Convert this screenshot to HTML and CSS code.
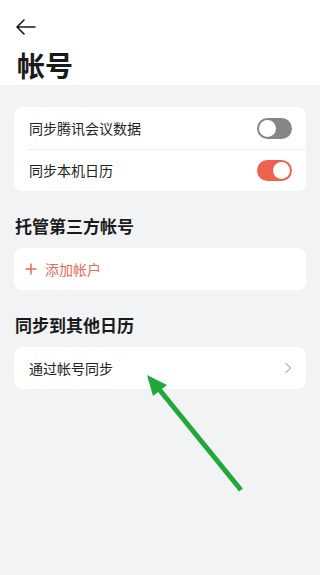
FILE: index.html
```html
<!DOCTYPE html>
<html lang="zh">
<head>
<meta charset="utf-8">
<link rel="stylesheet" href="styles.css">
</head>
<body>
<div class="page">
  <header class="header">
    <div class="back">
      <svg width="22" height="18" viewBox="0 0 22 18"><path d="M20 9H2M9 2L2 9l7 7" fill="none" stroke="#1a1a1a" stroke-width="1.6" stroke-linecap="round" stroke-linejoin="round"/></svg>
    </div>
    <h1 class="title">帐号</h1>
  </header>

  <div class="content">
    <div class="card first">
      <div class="row">
        <span class="label">同步腾讯会议数据</span>
        <span class="toggle off"><span class="knob"></span></span>
      </div>
      <div class="row divided">
        <span class="label">同步本机日历</span>
        <span class="toggle on"><span class="knob"></span></span>
      </div>
    </div>

    <div class="section-title">托管第三方帐号</div>
    <div class="card">
      <div class="row add">
        <svg class="plus" width="12" height="12" viewBox="0 0 12 12"><path d="M6 0.5v11M0.5 6h11" stroke="#e86a55" stroke-width="1.5"/></svg>
        <span class="add-label">添加帐户</span>
      </div>
    </div>

    <div class="section-title">同步到其他日历</div>
    <div class="card">
      <div class="row">
        <span class="label">通过帐号同步</span>
        <svg class="chev" width="8" height="12" viewBox="0 0 8 12"><path d="M2 1.5l4.5 4.5L2 10.5" fill="none" stroke="#b8b8bc" stroke-width="1.2" stroke-linecap="round" stroke-linejoin="round"/></svg>
      </div>
    </div>
  </div>

  <svg class="arrow" width="320" height="575" viewBox="0 0 320 575">
    <line x1="241" y1="490" x2="158" y2="388" stroke="#22a83a" stroke-width="5" stroke-linecap="butt"/>
    <polygon points="147,375 167,385 153,396" fill="#22a83a"/>
  </svg>
</div>
</body>
</html>
```
FILE: styles.css
```css
* { box-sizing: border-box; }
html, body {
  margin: 0;
  padding: 0;
}
body {
  width: 320px;
  height: 575px;
  overflow: hidden;
  background: #f2f3f5;
  font-family: "Noto Sans CJK SC", "Noto Sans", sans-serif;
  color: #1f1f1f;
}
.page {
  position: relative;
  width: 320px;
  height: 575px;
}
.header {
  background: #ffffff;
  height: 85px;
  padding: 17px 0 0 15px;
}
.back {
  height: 20px;
  display: flex;
  align-items: center;
}
.title {
  margin: 11px 0 0 2px;
  font-size: 28px;
  line-height: 34px;
  font-weight: 700;
  color: #1a1a1a;
}
.content {
  padding: 22px 14px 0 14px;
}
.card {
  background: #ffffff;
  border-radius: 8px;
}
.row {
  height: 42px;
  display: flex;
  align-items: center;
  justify-content: space-between;
  padding: 0 14px 0 15px;
}
.row.divided {
  position: relative;
}
.row.divided::before {
  content: "";
  position: absolute;
  top: 0;
  left: 14px;
  right: 0;
  height: 1px;
  background: #eeeff1;
}
.label {
  font-size: 14px;
  color: #222222;
}
.toggle {
  width: 35px;
  height: 21px;
  border-radius: 11px;
  display: flex;
  align-items: center;
  padding: 0 2px;
}
.toggle.off {
  background: #85858a;
  justify-content: flex-start;
}
.toggle.on {
  background: #f0604e;
  justify-content: flex-end;
}
.knob {
  width: 17px;
  height: 17px;
  border-radius: 50%;
  background: #ffffff;
}
.section-title {
  padding: 24px 0 11px 1px;
  font-size: 17px;
  line-height: 22px;
  font-weight: 700;
  color: #1a1a1a;
}
.row.add {
  justify-content: flex-start;
  padding-left: 11px;
}
.plus {
  display: block;
}
.add-label {
  margin-left: 8px;
  font-size: 14px;
  color: #e86a55;
}
.arrow {
  position: absolute;
  left: 0;
  top: 0;
  pointer-events: none;
}
```
